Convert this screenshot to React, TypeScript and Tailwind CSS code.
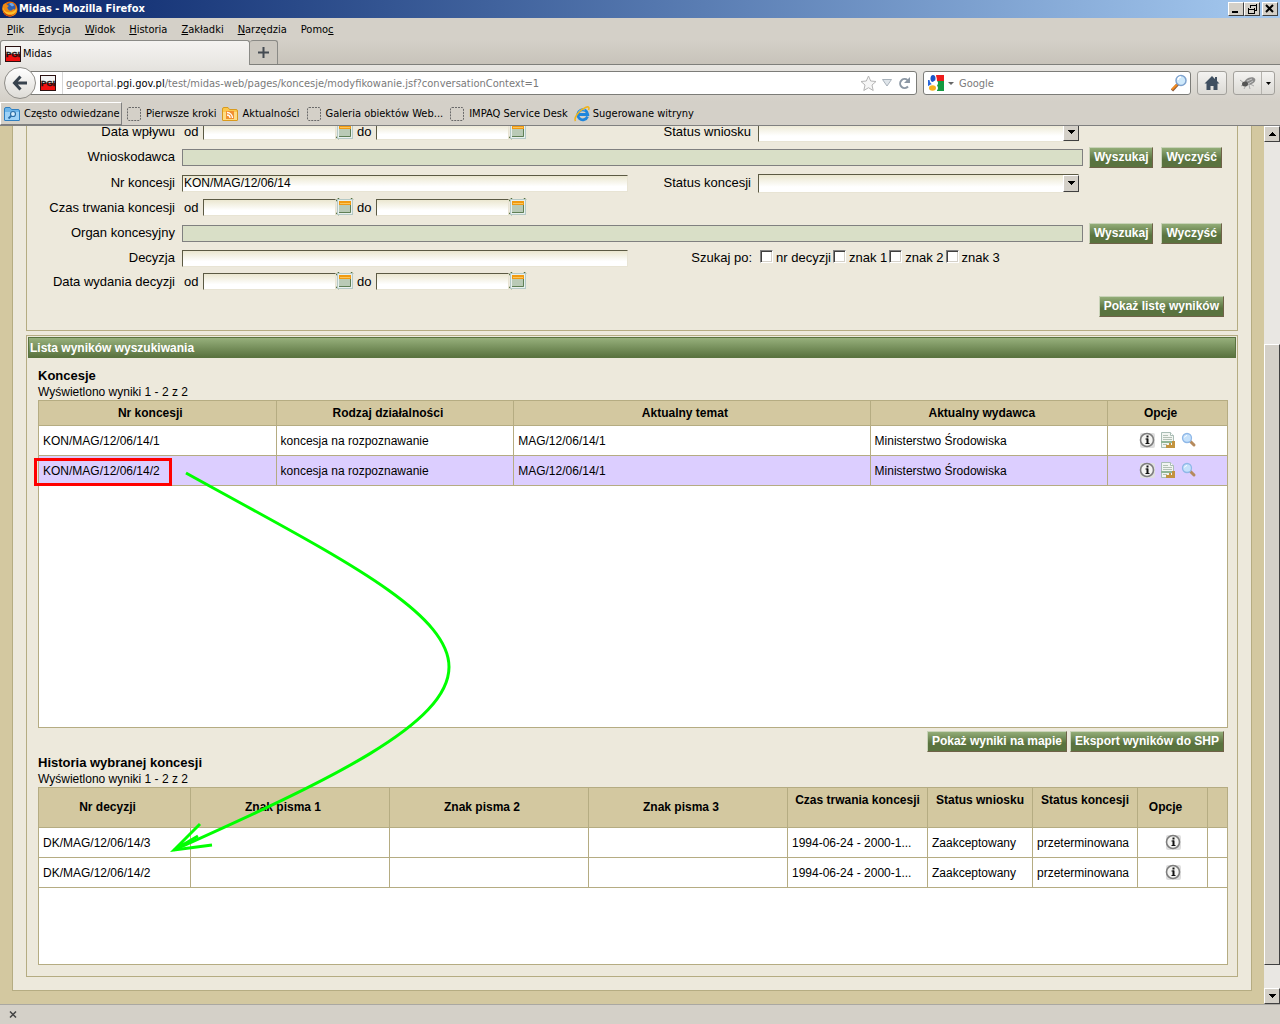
import React from "react";

const chromeFont = "font-['DejaVu_Sans_Condensed','Noto_Sans',sans-serif]";

function FirefoxIcon() {
  return (
    <svg width="16" height="16" viewBox="0 0 16 16" aria-hidden="true">
      <circle cx="8" cy="8" r="7.5" fill="#e66a00" />
      <circle cx="8.5" cy="7" r="5" fill="#2f5fb0" />
      <path d="M7 3c2-2 5-.5 5 1.500l-2 1z" fill="#6fa8e8" />
      <path d="M1 4c1-2 2-1 3-2 0 2 2 2 3 3-2 1-2 2-1 3 1 2 4 2 5 0 2 1 3 0 3-3 3 5 0 10-6 10.500C2 15.500-1 9 1 4z" fill="#f08a12" />
      <path d="M1 6c1 5 5 6 9 5 2-1 4-2 4.500-4C15 12 11 15 7.500 15 3 15 0 11 1 6z" fill="#fcc12a" />
      <path d="M1 8c1 6 9 8 13 3-3 6-13 6-13-3z" fill="#c8400a" />
    </svg>
  );
}

function PgiIcon() {
  return (
    <svg width="16" height="16" viewBox="0 0 16 16" aria-hidden="true">
      <rect width="16" height="16" fill="#2a1010" />
      <rect x="1" y="1" width="14" height="7" fill="#f4f4f4" />
      <rect x="1" y="8" width="14" height="7" fill="#f01010" />
      <text x="8" y="11" textAnchor="middle" fontSize="8" fontWeight="700" fontFamily="Liberation Sans, sans-serif" fill="#1a1414" stroke="#1a1414" strokeWidth="0.4">PGI</text>
    </svg>
  );
}

function FolderIcon({ kind }: { kind: "search" | "feed" }) {
  const blue = kind === "search";
  return (
    <svg width="16" height="16" viewBox="0 0 16 16" aria-hidden="true">
      <path d="M.5 14V3q0-1.500 1.500-1.500h4L7.500 3.500H14q1.500 0 1.500 1.500v9q0 .5-.5.500H1q-.5 0-.5-.500z" fill={blue ? "#6db5ea" : "#fbc84e"} stroke={blue ? "#2f7fc0" : "#d99a1c"} />
      <path d="M1 6h14v8H1z" fill={blue ? "#9ed2f7" : "#fddc85"} />
      {blue ? (
        <g>
          <path d="M7.500 9.500 4.500 12.500" stroke="#2b6ea8" strokeWidth="1.800" />
          <circle cx="9" cy="8" r="2.500" fill="#d6edfc" stroke="#2b6ea8" strokeWidth="1.200" />
        </g>
      ) : (
        <g fill="none">
          <rect x="4" y="5" width="8" height="8" fill="#f09030" />
          <path d="M5 9a3 3 0 0 1 3 3M5 6.500a5.500 5.500 0 0 1 5.500 5.500" stroke="#fff" strokeWidth="1.300" />
        </g>
      )}
    </svg>
  );
}

function BlankIcon() {
  return (
    <svg width="16" height="16" viewBox="0 0 16 16" aria-hidden="true">
      <rect x="1.500" y="1.500" width="13" height="13" rx="1.500" fill="none" stroke="#6a6a6a" strokeDasharray="2 1" />
    </svg>
  );
}

function IeIcon() {
  return (
    <svg width="16" height="16" viewBox="0 0 16 16" aria-hidden="true">
      <path d="M13.500 10.500A5 5 0 1 1 13.800 8.500H5" fill="none" stroke="#1f86dc" strokeWidth="2.800" />
      <path d="M4.500 6.500A5 5 0 0 1 11 4" fill="none" stroke="#6fc4f8" strokeWidth="1.200" />
      <path d="M1.500 15C-.5 12 5 4 12 1.200c3-1 3.500.5 2.500 2.800" fill="none" stroke="#f0b41c" strokeWidth="1.600" />
    </svg>
  );
}

function Magnifier() {
  return (
    <svg width="18" height="18" viewBox="0 0 18 18" aria-hidden="true">
      <path d="M8 10 2 16.500" stroke="#8a5a3c" strokeWidth="3" />
      <path d="M7 10.500 2 15.500" stroke="#f28a1e" strokeWidth="2" />
      <circle cx="11" cy="6.500" r="5" fill="#cfe9fb" stroke="#7fa3cf" strokeWidth="1.500" />
      <path d="M8 6a3 3 0 0 1 3-3" stroke="#fff" strokeWidth="1.500" fill="none" />
    </svg>
  );
}

function GoogleIcon() {
  return (
    <svg width="16" height="16" viewBox="0 0 16 16" aria-hidden="true">
      <rect width="16" height="16" fill="#fff" />
      <path d="M8 0h8v6H9z" fill="#ee1c1c" />
      <path d="M9 6h7v10H9z" fill="#159a41" />
      <path d="M0 5h4v6H0z" fill="#2a66d8" />
      <ellipse cx="5" cy="4.500" rx="3.500" ry="4.800" fill="#fff" />
      <ellipse cx="5" cy="3.500" rx="2.500" ry="3.500" fill="#1c55c8" />
      <circle cx="7.500" cy="8" r="2.500" fill="#fff" />
      <ellipse cx="5" cy="13" rx="5" ry="4" fill="#fff" />
      <ellipse cx="4.500" cy="13" rx="3.500" ry="2.700" fill="#f5b01c" />
    </svg>
  );
}

function InfoIcon() {
  return (
    <svg width="16" height="16" viewBox="0 0 16 16" aria-hidden="true">
      <rect x="1" y="1" width="15" height="15" rx="2" fill="#dedede" />
      <circle cx="8" cy="8" r="6.500" fill="#f4f4f2" stroke="#7d7d7d" strokeWidth="1.600" />
      <path d="M8.500 6.500v5" stroke="#111" strokeWidth="2" />
      <path d="M6.500 7H9M6.500 11.500h4" stroke="#111" />
      <rect x="7.500" y="3.500" width="2" height="2" fill="#111" />
    </svg>
  );
}

function ReportIcon() {
  return (
    <svg width="16" height="16" viewBox="0 0 16 16" aria-hidden="true">
      <path d="M1.500.5h9l3 3v12h-12z" fill="#f2f5f1" stroke="#a9bdb5" />
      <path d="M10.500.5v3h3" fill="#fff" stroke="#a9bdb5" />
      <path d="M3 3.500h5M3 5.500h9M3 7.500h9M3 12.500h4" stroke="#b3c0b5" />
      <path d="M1 10h13" stroke="#8fb596" strokeWidth="2" />
      <path d="M6 16v-3h3v-2h2v2h1v-4h3v7z" fill="#c2933f" />
    </svg>
  );
}

function SmallMagnifier() {
  return (
    <svg width="16" height="16" viewBox="0 0 16 16" aria-hidden="true">
      <path d="m9.500 9.500 3.500 3.500" stroke="#b58a5c" strokeWidth="3" strokeLinecap="round" />
      <circle cx="6" cy="6" r="4.500" fill="#c5e1fb" stroke="#8fb8e8" strokeWidth="1.300" />
      <path d="M3.500 5.500A3 3 0 0 1 6 3.500" stroke="#fff" fill="none" />
    </svg>
  );
}

function CalendarIcon() {
  return (
    <svg width="18" height="18" viewBox="0 0 18 18" aria-hidden="true">
      <path d="M0 3 3 0M15 0l2 2M0 15l3 2" stroke="#55703f" strokeWidth="1.200" />
      <rect x="1.500" y="1.500" width="15" height="15" fill="#e8f0ee" stroke="#b4c9c6" />
      <rect x="3" y="3" width="12" height="12" fill="#b9cab6" />
      <path d="M3 14.500h11.500V6" stroke="#5f7f55" fill="none" />
      <rect x="3" y="3" width="12" height="4" fill="#f09a12" />
      <path d="M4 5.500h10" stroke="#fbc65c" />
    </svg>
  );
}

function HomeIcon() {
  return (
    <svg width="16" height="16" viewBox="0 0 16 16" aria-hidden="true">
      <path d="M8 1 .5 8.500h2V15H6.500v-4h3v4h4V8.500h2L13 6V2h-2v2z" fill="#3f4f60" />
    </svg>
  );
}

function BugIcon() {
  return (
    <svg width="18" height="14" viewBox="0 0 18 14" aria-hidden="true">
      <path d="M1 4l4 3M2 10l4-2M5 13l2-4M11 13l-1-4M15 10l-4-2" stroke="#aaa" />
      <ellipse cx="11" cy="5" rx="5.500" ry="3.500" transform="rotate(-20 11 5)" fill="#8b8b8b" />
      <ellipse cx="6" cy="8" rx="3" ry="2.500" fill="#555" />
      <path d="M8 5l5-2M9 8l5-3" stroke="#c9c9c9" />
    </svg>
  );
}

function Caret({ up = false }: { up?: boolean }) {
  return (
    <svg width="7" height="4" viewBox="0 0 7 4" shapeRendering="crispEdges" aria-hidden="true">
      <path d={up ? "M0 4 3.500 0 7 4z" : "M0 0h7L3.500 4z"} fill="#000" />
    </svg>
  );
}

const raised = "border border-t-white border-l-white border-r-[#404040] border-b-[#404040] bg-[#d4d0c8]";

function WindowButton({ label, children }: { label: string; children: React.ReactNode }) {
  return (
    <button aria-label={label} className={`flex h-[14px] w-4 items-center justify-center ${raised}`}>
      <svg width="12" height="10" viewBox="0 0 12 10" fill="none" stroke="#000" shapeRendering="crispEdges">{children}</svg>
    </button>
  );
}

function TitleBar() {
  return (
    <header className="flex h-[18px] items-center bg-linear-to-r from-[#0a246a] to-[#a6caf0] pr-[2px] pl-[2px]">
      <FirefoxIcon />
      <h1 className="flex-1 pl-px text-[11px] font-bold text-white">Midas - Mozilla Firefox</h1>
      <WindowButton label="Minimalizuj"><path d="M2 8h6" strokeWidth="2" /></WindowButton>
      <WindowButton label="Przywróć"><path d="M4 1h6M4 1v3M10 0v6H8M2 5h6M2 4v5h6V4" strokeWidth="1" /></WindowButton>
      <span className="w-[2px]" />
      <WindowButton label="Zamknij"><path d="M2 1l7 7M9 1 2 8" strokeWidth="2" shapeRendering="auto" /></WindowButton>
    </header>
  );
}

const menus: [string, string, string][] = [
  ["", "P", "lik"],
  ["", "E", "dycja"],
  ["", "W", "idok"],
  ["", "H", "istoria"],
  ["", "Z", "akładki"],
  ["", "N", "arzędzia"],
  ["Pomo", "c", ""],
];

function BrowserChrome() {
  return (
    <div className={`shrink-0 bg-[#d4d0c8] text-[11px] leading-[14px] text-black ${chromeFont}`}>
      <TitleBar />
      <nav className="flex h-[22px] items-center gap-[14px] pt-[2px] pl-[7px]">
        {menus.map(([a, u, b]) => (
          <button key={a + u + b}>{a}<span className="underline">{u}</span>{b}</button>
        ))}
      </nav>
      <div className="flex h-[25px] items-end border-b border-[#7f7f7b] bg-linear-to-b from-[#d4d0c8] to-[#c8c3ba]">
        <button className="-mb-px flex h-[25px] w-[250px] items-center gap-[2px] rounded-t-[3px] border border-b-0 border-[#8a8a86] bg-linear-to-b from-[#f4f3f1] to-[#e8e6e2] pt-px pl-1">
          <PgiIcon />Midas
        </button>
        <button aria-label="Nowa karta" className="flex h-6 w-7 items-center justify-center rounded-t-[3px] border border-b-0 border-l-0 border-[#8a8a86] bg-[#cbc7bf]">
          <svg width="11" height="11" viewBox="0 0 11 11"><path d="M5.500 0v11M0 5.500h11" stroke="#444b52" strokeWidth="2" /></svg>
        </button>
      </div>
      <div className="flex h-9 items-center gap-[6px] bg-linear-to-b from-[#e8e6e2] to-[#d4d0c8] pr-[5px] pl-1">
        <div className="flex min-w-0 flex-1 items-center">
          <button aria-label="Wstecz" className="z-10 flex size-8 shrink-0 items-center justify-center rounded-full border border-[#8f8d88] bg-linear-to-b from-white to-[#dedcd7]">
            <svg width="16" height="16" viewBox="0 0 16 16"><path d="M8.500 1.500 2.500 8l6 6.500M3 8h12" fill="none" stroke="#38434e" strokeWidth="3" /></svg>
          </button>
          <div className="-ml-[6px] flex h-6 min-w-0 flex-1 items-center rounded-r-[3px] border border-[#7c7c78] bg-white pr-[5px] pl-[9px]">
            <div className="-my-px flex h-[22px] shrink-0 items-center border-r border-[#d6d6d6] pr-[6px]"><PgiIcon /></div>
            <p className="min-w-0 flex-1 truncate pt-px pl-[3px] text-[#7a7a7a]">
              geoportal.<span className="text-black">pgi.gov.pl</span>/test/midas-web/pages/koncesje/modyfikowanie.jsf?conversationContext=1
            </p>
            <button aria-label="Dodaj zakładkę" className="shrink-0">
              <svg width="17" height="17" viewBox="0 0 17 17"><path d="m8.500 1 2.200 5 5.300.5-4 3.500 1.200 5.500-4.700-2.800L3.800 15.500 5 10 1 6.500 6.300 6z" fill="#f6f6f6" stroke="#b5b5b5" /></svg>
            </button>
            <button aria-label="Historia adresów" className="shrink-0 pl-[5px]">
              <svg width="10" height="8" viewBox="0 0 10 8"><path d="M.5.5h9L5 7z" fill="#dfe5ea" stroke="#a8b2bb" /></svg>
            </button>
            <button aria-label="Odśwież" className="shrink-0 pl-[6px]">
              <svg width="13" height="13" viewBox="0 0 13 13"><path d="M10 9.500A4.500 4.500 0 1 1 9.500 3" fill="none" stroke="#8c98a5" strokeWidth="2" /><path d="M12 0v6H6z" fill="#8c98a5" /></svg>
            </button>
          </div>
        </div>
        <div className="flex h-6 w-[268px] shrink-0 items-center rounded-[3px] border border-[#7c7c78] bg-white pr-[2px] pl-1">
          <GoogleIcon />
          <button aria-label="Wybierz wyszukiwarkę" className="px-1"><svg width="6" height="3" viewBox="0 0 6 3"><path d="M0 0h6L3 3z" fill="#666" /></svg></button>
          <input aria-label="Wyszukiwarka" placeholder="Google" className="min-w-0 flex-1 pt-px pl-px outline-none placeholder:text-[#7a7a7a]" />
          <Magnifier />
        </div>
        <button aria-label="Strona startowa" className="flex h-6 w-[30px] shrink-0 items-center justify-center rounded-[3px] border border-[#a3a19c] bg-linear-to-b from-[#f4f3f1] to-[#dcdad5]"><HomeIcon /></button>
        <div className="flex h-6 w-[42px] shrink-0 rounded-[3px] border border-[#a3a19c] bg-linear-to-b from-[#f4f3f1] to-[#dcdad5]">
          <button aria-label="Dodatek" className="flex flex-1 items-center justify-center border-r border-[#b5b3ae]"><BugIcon /></button>
          <button aria-label="Więcej" className="flex w-3 items-center justify-center"><svg width="5" height="3" viewBox="0 0 5 3"><path d="M0 0h5L2.500 3z" fill="#000" /></svg></button>
        </div>
      </div>
      <div className="flex h-[25px] items-stretch gap-[6px] border-b border-[#808080] whitespace-nowrap">
        <button className="mt-px flex w-[122px] shrink-0 items-center gap-1 border border-t-white border-r-[#808080] border-b-[#808080] border-l-white pl-[3px]"><FolderIcon kind="search" />Często odwiedzane</button>
        <a href="#" className="-ml-[2px] flex items-center gap-1 pt-px"><BlankIcon />Pierwsze kroki</a>
        <a href="#" className="flex items-center gap-1 pt-px"><FolderIcon kind="feed" />Aktualności</a>
        <a href="#" className="flex items-center gap-1 pt-px"><BlankIcon />Galeria obiektów Web...</a>
        <a href="#" className="flex items-center gap-1 pt-px"><BlankIcon />IMPAQ Service Desk</a>
        <a href="#" className="flex items-center gap-[3px] pt-px"><IeIcon />Sugerowane witryny</a>
      </div>
    </div>
  );
}

const rowCls = "grid grid-cols-[149px_446fr_118px_325fr_134px] items-center gap-x-[6px]";
const labelCls = "pr-px text-right whitespace-nowrap";
const fieldCls = "border border-t-[#5c5a44] border-r-[#e8e4d4] border-b-[#e8e4d4] border-l-[#5c5a44] bg-linear-to-b from-[#ebe7d0] to-white to-70% px-px text-[12px] leading-[14px] outline-none";

function GreenButton({ children }: { children: React.ReactNode }) {
  return (
    <button className="h-[21px] border border-t-[#c9d3b8] border-r-[#6f6248] border-b-[#6f6248] border-l-[#c9d3b8] bg-linear-to-b from-[#93ad78] to-[#5a733f] to-60% px-1 text-[12px] leading-[19px] font-bold whitespace-nowrap text-white">
      {children}
    </button>
  );
}

function DateField({ label }: { label: string }) {
  return (
    <span className="flex items-center pb-[2px]">
      <input aria-label={label} className={`h-[17px] w-[133px] ${fieldCls}`} />
      <button aria-label={`Kalendarz: ${label}`}><CalendarIcon /></button>
    </span>
  );
}

function DateRange({ label }: { label: string }) {
  return (
    <div className="flex items-center pl-[2px]">
      <span className="w-[19px]">od</span>
      <DateField label={`${label} od`} />
      <span className="w-[22px] pl-[3px]">do</span>
      <DateField label={`${label} do`} />
    </div>
  );
}

function SelectField({ id }: { id: string }) {
  return (
    <div className="relative mr-1">
      <select id={id} className={`block h-[19px] w-full appearance-none ${fieldCls}`}><option></option></select>
      <span className={`pointer-events-none absolute top-px right-0 flex h-[17px] w-4 items-center justify-center ${raised}`}><Caret /></span>
    </div>
  );
}

function LookupRow({ id, label }: { id: string; label: string }) {
  return (
    <div className={`h-[26px] ${rowCls}`}>
      <label htmlFor={id} className={labelCls}>{label}</label>
      <input id={id} readOnly className="col-span-3 h-[17px] w-full border border-[#808080] bg-[#d9dfc7] outline-none" />
      <div className="flex gap-2"><GreenButton>Wyszukaj</GreenButton><GreenButton>Wyczyść</GreenButton></div>
    </div>
  );
}

function SearchForm() {
  return (
    <form className="border border-t-0 border-[#b5ac82] pr-[13px] pb-[13px] text-[13px] leading-4">
      <div className="pr-px">
        <div className={`-mt-[6px] h-6 ${rowCls}`}>
          <span className={labelCls}>Data wpływu</span>
          <DateRange label="Data wpływu" />
          <label htmlFor="status-wniosku" className={labelCls}>Status wniosku</label>
          <SelectField id="status-wniosku" />
        </div>
        <LookupRow id="wnioskodawca" label="Wnioskodawca" />
        <div className={`h-[26px] ${rowCls}`}>
          <label htmlFor="nr-koncesji" className={labelCls}>Nr koncesji</label>
          <input id="nr-koncesji" defaultValue="KON/MAG/12/06/14" className={`h-[17px] ${fieldCls}`} />
          <label htmlFor="status-koncesji" className={labelCls}>Status koncesji</label>
          <SelectField id="status-koncesji" />
        </div>
        <div className={`h-6 ${rowCls}`}>
          <span className={labelCls}>Czas trwania koncesji</span>
          <DateRange label="Czas trwania koncesji" />
        </div>
        <LookupRow id="organ" label="Organ koncesyjny" />
        <div className={`h-6 ${rowCls}`}>
          <label htmlFor="decyzja" className={labelCls}>Decyzja</label>
          <input id="decyzja" className={`h-[17px] ${fieldCls}`} />
          <span className="text-right">Szukaj po:</span>
          <div className="col-span-2 flex items-center gap-[2px] pl-[2px]">
            {["nr decyzji", "znak 1", "znak 2", "znak 3"].map((t) => (
              <label key={t} className="flex items-center gap-[3px] whitespace-nowrap">
                <input type="checkbox" className="mb-[3px] size-[13px] appearance-none border border-t-[#808080] border-r-white border-b-white border-l-[#808080] bg-white shadow-[inset_1px_1px_0_#404040,inset_-1px_-1px_0_#d4d0c8]" />
                {t}
              </label>
            ))}
          </div>
        </div>
        <div className={`h-6 ${rowCls}`}>
          <span className={labelCls}>Data wydania decyzji</span>
          <DateRange label="Data wydania decyzji" />
        </div>
      </div>
      <div className="mt-[2px] flex justify-end"><GreenButton>Pokaż listę wyników</GreenButton></div>
    </form>
  );
}

const cell = "h-[30px] border-b border-r border-[#b5ac82] px-1 last:border-r-0 truncate";
const head = "border-b border-r border-[#b5ac82] bg-[#d3c8a0] last:border-r-0";

function IconButton({ label, children }: { label: string; children: React.ReactNode }) {
  return <button aria-label={label} className="block">{children}</button>;
}

function ConcessionTable() {
  return (
    <div className="h-[328px] border border-[#b5ac82] bg-white">
      <table className="w-full table-fixed border-separate border-spacing-0 text-[12px] leading-[14px]">
        <colgroup><col className="w-[20%]" /><col className="w-[20%]" /><col className="w-[30%]" /><col className="w-[20%]" /><col className="w-[10%]" /></colgroup>
        <thead>
          <tr>
            {["Nr koncesji", "Rodzaj działalności", "Aktualny temat", "Aktualny wydawca", "Opcje"].map((h) => (
              <th key={h} className={`h-[25px] pr-[14px] ${head}`}>{h}</th>
            ))}
          </tr>
        </thead>
        <tbody>
          {[1, 2].map((n) => (
            <tr key={n} className={n === 2 ? "bg-[#dcceff]" : "bg-white"}>
              <td className="relative h-[30px] border-r border-b border-[#b5ac82] px-1">
                KON/MAG/12/06/14/{n}
                {n === 2 && <span className="pointer-events-none absolute top-[2px] -left-[5px] h-7 w-[138px] border-[3px] border-[#ff0000]" />}
              </td>
              <td className={cell}>koncesja na rozpoznawanie</td>
              <td className={cell}>MAG/12/06/14/1</td>
              <td className={cell}>Ministerstwo Środowiska</td>
              <td className={cell}>
                <div className="flex justify-center gap-[5px] pb-[2px]">
                  <IconButton label="Informacje"><InfoIcon /></IconButton>
                  <IconButton label="Raport"><ReportIcon /></IconButton>
                  <IconButton label="Podgląd"><SmallMagnifier /></IconButton>
                </div>
              </td>
            </tr>
          ))}
        </tbody>
      </table>
    </div>
  );
}

function HistoryTable() {
  return (
    <div className="h-[178px] border border-[#b5ac82] bg-white">
      <table className="w-full table-fixed border-separate border-spacing-0 text-[12px] leading-[14px]">
        <colgroup>
          <col className="w-[152px]" /><col /><col /><col />
          <col className="w-[140px]" /><col className="w-[105px]" /><col className="w-[105px]" /><col className="w-[70px]" /><col className="w-[19px]" />
        </colgroup>
        <thead>
          <tr className="whitespace-nowrap">
            {["Nr decyzji", "Znak pisma 1", "Znak pisma 2", "Znak pisma 3"].map((h) => (
              <th key={h} className={`h-10 pr-[14px] pb-[2px] ${head}`}>{h}</th>
            ))}
            {["Czas trwania koncesji", "Status wniosku", "Status koncesji"].map((h) => (
              <th key={h} className={`h-10 pb-4 ${head}`}>{h}</th>
            ))}
            <th className={`h-10 pr-[14px] pb-[2px] ${head}`}>Opcje</th>
            <th className={`h-10 ${head}`} />
          </tr>
        </thead>
        <tbody>
          {[3, 2].map((n) => (
            <tr key={n}>
              <td className={cell}>DK/MAG/12/06/14/{n}</td>
              <td className={cell} /><td className={cell} /><td className={cell} />
              <td className={cell}>1994-06-24 - 2000-1...</td>
              <td className={cell}>Zaakceptowany</td>
              <td className={cell}>przeterminowana</td>
              <td className={cell}>
                <div className="flex justify-center pb-[2px]"><IconButton label="Informacje"><InfoIcon /></IconButton></div>
              </td>
              <td className={cell} />
            </tr>
          ))}
        </tbody>
      </table>
    </div>
  );
}

function AnnotationArrow() {
  return (
    <svg className="pointer-events-none absolute top-[345px] left-[170px]" width="290" height="390" viewBox="170 471 290 390" fill="none" stroke="#00ff00" strokeWidth="3" aria-hidden="true">
      <path d="M186 473C330 553 449 610 449 667C449 724 330 780 174 850" />
      <path d="M200 824 174 850 212 845M174 850l24-14" />
    </svg>
  );
}

function ResultsPanel() {
  return (
    <section className="mt-1 border border-[#b5ac82] p-px pb-[11px]">
      <h2 className="h-[21px] border border-[#5a733f] bg-linear-to-b from-[#97b07c] to-[#5a733f] px-px text-[12px] leading-[20px] font-bold text-white">Lista wyników wyszukiwania</h2>
      <div className="pt-[10px] pr-2 pl-[10px]">
        <h3 className="text-[13px] leading-4 font-bold">Koncesje</h3>
        <p className="text-[12px] leading-4">Wyświetlono wyniki 1 - 2 z 2</p>
        <ConcessionTable />
        <div className="flex justify-end gap-[3px] pt-[3px] pr-1 pb-[3px]">
          <GreenButton>Pokaż wyniki na mapie</GreenButton>
          <GreenButton>Eksport wyników do SHP</GreenButton>
        </div>
        <h3 className="text-[13px] leading-4 font-bold">Historia wybranej koncesji</h3>
        <p className="text-[12px] leading-4">Wyświetlono wyniki 1 - 2 z 2</p>
        <HistoryTable />
      </div>
    </section>
  );
}

function ScrollBar() {
  return (
    <div className="flex w-4 shrink-0 flex-col bg-[#e9e7e3]" aria-hidden="true">
      <div className={`flex h-4 items-center justify-center ${raised}`}><Caret up /></div>
      <div className="flex-[202]" />
      <div className={`flex-[621] ${raised}`} />
      <div className="flex-[23]" />
      <div className={`flex h-4 items-center justify-center ${raised}`}><Caret /></div>
    </div>
  );
}

export default function App() {
  return (
    <div className="flex min-h-screen flex-col bg-[#d4d0c8]">
      <BrowserChrome />
      <div className="flex flex-1">
        <main className="relative min-w-0 flex-1 overflow-hidden bg-[#d3c8a0] px-3 pb-[13px] font-['Liberation_Sans',Arial,sans-serif] text-black">
          <div className="border border-t-0 border-[#b5ac82] bg-[#ede9dc] px-[13px] pb-[13px]">
            <SearchForm />
            <ResultsPanel />
          </div>
          <AnnotationArrow />
        </main>
        <ScrollBar />
      </div>
      <footer className="flex h-5 shrink-0 items-center border-t border-[#aaa8a2] bg-[#d4d0c8] pl-[9px]">
        <button aria-label="Zamknij pasek"><svg width="8" height="7" viewBox="0 0 8 7"><path d="m1 .5 6 6M7 .5l-6 6" stroke="#444" strokeWidth="1.500" /></svg></button>
      </footer>
    </div>
  );
}
